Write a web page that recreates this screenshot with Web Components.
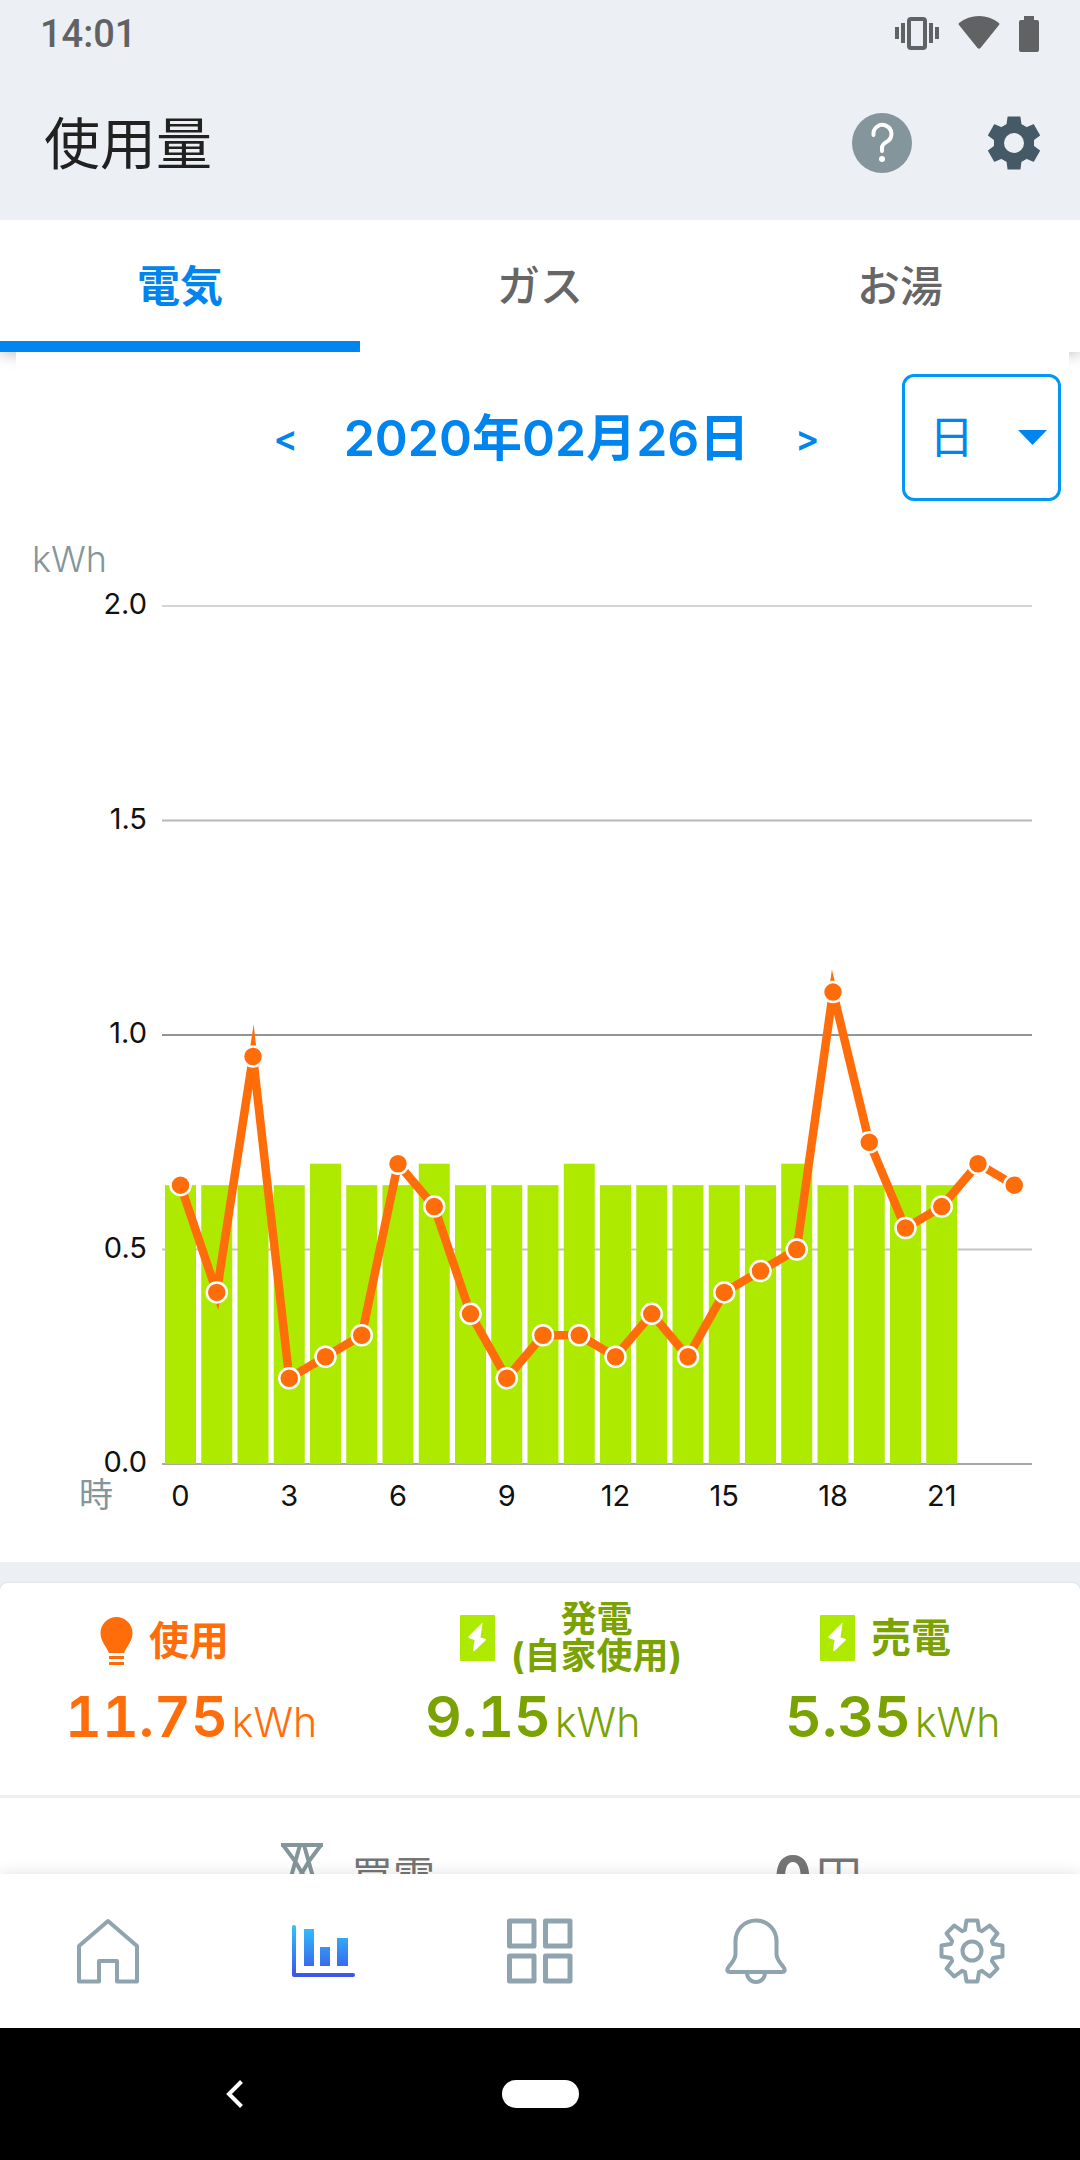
<!DOCTYPE html>
<html lang="ja">
<head>
<meta charset="UTF-8">
<meta name="viewport" content="width=device-width, initial-scale=1">
<title>使用量</title>
<style>
    body {
        margin: 0;
        background: #fff;
        font-family: Inter, "Noto Sans CJK JP", sans-serif;
    }
</style>
</head>
<body>
<energy-app>
    <status-bar slot="top">14:01</status-bar>
    <page-header slot="top">使用量</page-header>
    <tab-bar slot="top">
        <tab-item active>電気</tab-item>
        <tab-item>ガス</tab-item>
        <tab-item>お湯</tab-item>
    </tab-bar>
    <date-picker>2020年02月26日</date-picker>
    <usage-chart></usage-chart>
    <summary-card>
        <summary-item icon="bulb" value="11.75">使用</summary-item>
        <summary-item icon="bolt" value="9.15" small>発電<br>(自家使用)</summary-item>
        <summary-item icon="bolt" value="5.35">売電</summary-item>
        <cost-row slot="cost" value="0">買電</cost-row>
    </summary-card>
    <bottom-nav slot="bottom"></bottom-nav>
    <system-nav slot="bottom"></system-nav>
</energy-app>

<script>
class EnergyApp extends HTMLElement {
    constructor() {
        super();
        this.attachShadow({ mode: 'open' });
        this.shadowRoot.innerHTML = `
            <style>
                :host {
                    display: flex;
                    flex-direction: column;
                    height: 100vh;
                    overflow: hidden;
                }
                header, footer {
                    flex: none;
                    position: relative;
                }
                header {
                    box-shadow: 0 2px 14px rgba(0, 0, 0, 0.25);
                }
                main {
                    flex: 1;
                    min-height: 0;
                    overflow: hidden;
                    position: relative;
                }
                footer {
                    box-shadow: 0 0 16px rgba(0, 0, 0, 0.12);
                }
            </style>
            <header><slot name="top"></slot></header>
            <main><slot></slot></main>
            <footer><slot name="bottom"></slot></footer>
        `;
    }
}

class StatusBar extends HTMLElement {
    constructor() {
        super();
        this.attachShadow({ mode: 'open' });
        this.shadowRoot.innerHTML = `
            <style>
                :host {
                    display: flex;
                    align-items: center;
                    gap: 19px;
                    height: 68px;
                    padding: 0 41px 0 40px;
                    background: #ecf0f5;
                    color: #616264;
                    font: 500 38px/70px Roboto, sans-serif;
                }
                span { flex: 1; }
                svg { fill: currentColor; }
            </style>
            <span><slot></slot></span>
            <svg width="44" height="36" viewBox="-22 -17 44 36">
                <rect x="-8" y="-14" width="16" height="29" rx="2" fill="none" stroke="currentColor" stroke-width="4"/>
                <path d="M-16-10h4v20h-4zM12-10h4v20h-4zM-22-6h4v12h-4zM18-6h4v12h-4z"/>
            </svg>
            <svg width="42" height="36" viewBox="0 1 42 36">
                <path d="M1 10Q0 9 1 8Q10 1 21 1T41 8Q42 9 41 10L22.500 33Q21 34.500 19.500 33Z"/>
            </svg>
            <svg width="20" height="36" viewBox="0 0 20 36">
                <path d="M5 0h10v4h3q2 0 2 2v28q0 2-2 2H2q-2 0-2-2V6q0-2 2-2h3z"/>
            </svg>
        `;
    }
}

class PageHeader extends HTMLElement {
    constructor() {
        super();
        this.attachShadow({ mode: 'open' });
        this.shadowRoot.innerHTML = `
            <style>
                :host {
                    display: flex;
                    align-items: center;
                    gap: 72px;
                    height: 150px;
                    padding: 0 36px 2px 44px;
                    background: #ecf0f5;
                }
                h1 {
                    flex: 1;
                    margin: 0;
                    padding-top: 2px;
                    color: #212121;
                    font-size: 56px;
                    line-height: 68px;
                    font-weight: 400;
                }
                button {
                    display: flex;
                    padding: 0;
                    border: 0;
                    background: none;
                }
            </style>
            <h1><slot></slot></h1>
            <button aria-label="ヘルプ">
                <svg width="60" height="60" viewBox="-30 -30 60 60">
                    <circle r="30" fill="#84959b"/>
                    <path d="M-8.500-8A9 9 0 1 1 6-2Q0 1 0 5V8" fill="none" stroke="#fff" stroke-width="4" stroke-linecap="round"/>
                    <circle cy="16" r="3" fill="#fff"/>
                </svg>
            </button>
            <button aria-label="設定">
                <svg width="60" height="60" viewBox="-30 -30 60 60">
                    <g id="gear" fill="#455a66"></g>
                    <circle r="10" fill="#ecf0f5"/>
                </svg>
            </button>
        `;
        const teeth = [0, 60, 120, 180, 240, 300].map(a =>
            `<path transform="rotate(${a})" d="M-12 0L-12.500-16L-7.500-18.500L-6.500-26Q-6.500-26.500-6-26.500H6Q6.500-26.500 6.500-26L7.500-18.500L12.500-16L12 0Z"/>`);
        this.shadowRoot.getElementById('gear').innerHTML = teeth.join('');
    }
}

class TabBar extends HTMLElement {
    constructor() {
        super();
        this.attachShadow({ mode: 'open' });
        this.shadowRoot.innerHTML = `
            <style>
                :host {
                    display: grid;
                    grid-template-columns: repeat(3, 1fr);
                    background: #fff;
                }
            </style>
            <slot></slot>
        `;
    }
}

class TabItem extends HTMLElement {
    constructor() {
        super();
        this.attachShadow({ mode: 'open' });
        this.shadowRoot.innerHTML = `
            <style>
                :host {
                    display: block;
                }
                button {
                    width: 100%;
                    height: 132px;
                    padding: 0 0 6px;
                    border: 0;
                    background: none;
                    color: #666;
                    font: inherit;
                    font-size: 43px;
                    font-weight: 500;
                }
                :host([active]) button {
                    color: #0085ee;
                    font-weight: 700;
                    box-shadow: inset 0 -11px #0085ee;
                }
            </style>
            <button><slot></slot></button>
        `;
    }
}

class DatePicker extends HTMLElement {
    constructor() {
        super();
        this.attachShadow({ mode: 'open' });
        this.shadowRoot.innerHTML = `
            <style>
                :host {
                    display: grid;
                    grid-template-columns: 1fr auto 1fr;
                    align-items: center;
                    margin: 0 11px 0 16px;
                    padding: 22px 8px 0 16px;
                    background: #fff;
                    color: #0085ee;
                }
                .date {
                    grid-column: 2;
                    display: flex;
                    align-items: center;
                    gap: 46px;
                    font-size: 50px;
                    font-weight: 600;
                    white-space: nowrap;
                }
                .date span {
                    padding-bottom: 8px;
                }
                button {
                    padding: 0;
                    border: 0;
                    background: none;
                    color: inherit;
                    font: inherit;
                    font-size: 36px;
                }
                .unit {
                    justify-self: end;
                    position: relative;
                }
                select {
                    display: block;
                    appearance: none;
                    box-sizing: border-box;
                    width: 159px;
                    height: 127px;
                    padding: 0 24px;
                    border: 3px solid #0097f5;
                    border-radius: 12px;
                    background: #fff;
                    color: inherit;
                    font: inherit;
                    font-size: 45px;
                }
                svg {
                    position: absolute;
                    right: 14px;
                    top: 56px;
                    pointer-events: none;
                }
            </style>
            <div class="date">
                <button aria-label="前の日">&lt;</button>
                <span><slot></slot></span>
                <button aria-label="次の日">&gt;</button>
            </div>
            <div class="unit">
                <select aria-label="期間">
                    <option>日</option>
                    <option>月</option>
                    <option>年</option>
                </select>
                <svg width="29" height="15" viewBox="0 0 29 15"><path d="M0 0h29L14.500 15z" fill="#0085ee"/></svg>
            </div>
        `;
    }
}

class UsageChart extends HTMLElement {
    constructor() {
        super();
        this.attachShadow({ mode: 'open' });

        const used = [0.65, 0.4, 0.95, 0.2, 0.25, 0.3, 0.7, 0.6, 0.35, 0.2, 0.3, 0.3,
            0.25, 0.35, 0.25, 0.4, 0.45, 0.5, 1.1, 0.75, 0.55, 0.6, 0.7, 0.65];
        const generated = [0.65, 0.65, 0.65, 0.65, 0.7, 0.65, 0.65, 0.7, 0.65, 0.65, 0.65,
            0.7, 0.65, 0.65, 0.65, 0.65, 0.65, 0.7, 0.65, 0.65, 0.65, 0.65];

        const left = 162;
        const right = 1032;
        const base = 963;
        const step = (right - left) / 24;
        const x = hour => left + 18.5 + hour * step;
        const y = kwh => base - kwh * 429;

        const lines = [[2, '#d4d4d4'], [1.5, '#b8b8b8'], [1, '#949494'], [0.5, '#c4c4c4'], [0, '#a8a8a8']];
        const grid = lines.map(([v, color]) => `
            <line x1="${left}" x2="${right}" y1="${y(v)}" y2="${y(v)}" stroke="${color}" stroke-width="2"/>
            <text x="147" y="${y(v) + 8}" text-anchor="end">${v.toFixed(1)}</text>`);
        const bars = generated.map((v, i) =>
            `<rect x="${x(i) - 15.5}" y="${y(v)}" width="31" height="${base - y(v)}"/>`);
        const hours = [0, 3, 6, 9, 12, 15, 18, 21].map(h =>
            `<text x="${x(h)}" y="${base + 42}" text-anchor="middle">${h}</text>`);
        const points = used.map((v, i) => `${x(i)},${y(v)}`);
        const dots = used.map((v, i) => `<circle cx="${x(i)}" cy="${y(v)}" r="10"/>`);

        this.shadowRoot.innerHTML = `
            <style>
                :host {
                    display: block;
                }
                svg {
                    display: block;
                    width: 100%;
                    height: auto;
                }
                text { font-size: 29px; fill: #111; }
                .unit { font-size: 36px; font-weight: 300; fill: #84959b; }
                .hour { font-size: 34px; font-weight: 400; }
                .bars { fill: #aeea00; }
                polyline {
                    fill: none;
                    stroke: #ff6d0b;
                    stroke-width: 8.5;
                    stroke-miterlimit: 10;
                }
                circle { fill: #ff6d0b; stroke: #fff; stroke-width: 2.5; }
            </style>
            <svg viewBox="0 0 1080 1061" role="img" aria-label="電気使用量グラフ">
                <text class="unit" x="32" y="71">kWh</text>
                ${grid.join('')}
                <g class="bars">${bars.join('')}</g>
                <polyline points="${points.join(' ')}"/>
                ${dots.join('')}
                ${hours.join('')}
                <text class="unit hour" x="79" y="1006">時</text>
            </svg>
        `;
    }
}

class SummaryCard extends HTMLElement {
    constructor() {
        super();
        this.attachShadow({ mode: 'open' });
        this.shadowRoot.innerHTML = `
            <style>
                :host {
                    display: block;
                    padding-top: 21px;
                    background: #ecf0f5;
                }
                .card {
                    border-radius: 8px 8px 0 0;
                    background: #fff;
                    box-shadow: 0 0 3px rgba(0, 0, 0, 0.1);
                }
                .items {
                    display: grid;
                    grid-template-columns: repeat(3, 1fr);
                    padding: 19px 0 46px;
                    border-bottom: 3px solid #ecf0f5;
                }
            </style>
            <div class="card">
                <div class="items"><slot></slot></div>
                <slot name="cost"></slot>
            </div>
        `;
    }
}

const ICONS = {
    bulb: `<svg width="33" height="48" viewBox="0 0 33 48" fill="currentColor">
        <path d="M16.500 0A16 16 0 0 1 32.500 16C32.500 24 27 29 24 36H9C6 29 .500 24 .500 16A16 16 0 0 1 16.500 0Z"/>
        <path d="M9 39h15v3H9zM9 45h15v3H9z"/>
    </svg>`,
    bolt: `<svg width="35" height="46" viewBox="0 0 35 46">
        <rect width="35" height="46" rx="1" fill="#aeea00"/>
        <path d="M22 8L8.500 21.500V23L14.500 25L13 36H14.500L26 25V24L20.500 22.500L22.500 8.500Z" fill="#fff"/>
    </svg>`
};

class SummaryItem extends HTMLElement {
    constructor() {
        super();
        this.attachShadow({ mode: 'open' });
    }

    connectedCallback() {
        const icon = this.getAttribute('icon');
        this.shadowRoot.innerHTML = `
            <style>
                :host {
                    display: block;
                    color: ${icon === 'bulb' ? '#ff6d0b' : '#7aa200'};
                }
                .label {
                    display: flex;
                    align-items: center;
                    gap: 16px;
                    box-sizing: border-box;
                    height: 72px;
                    padding-left: 100px;
                    font-size: 40px;
                    line-height: 40px;
                    font-weight: 700;
                    white-space: nowrap;
                }
                :host([icon="bulb"]) .label {
                    padding-top: 6px;
                }
                :host([small]) .label {
                    font-size: 36px;
                    line-height: 37px;
                    text-align: center;
                }
                .value {
                    height: 64px;
                    margin-top: 11px;
                    padding-left: 65px;
                    font-size: 57px;
                    line-height: 64px;
                    font-weight: 600;
                    font-variant-numeric: tabular-nums;
                    white-space: nowrap;
                }
                small {
                    margin-left: 4px;
                    font-size: 41px;
                    line-height: 40px;
                    font-weight: 300;
                }
            </style>
            <div class="label">${ICONS[icon]}<span><slot></slot></span></div>
            <div class="value">${this.getAttribute('value')}<small>kWh</small></div>
        `;
    }
}

class CostRow extends HTMLElement {
    constructor() {
        super();
        this.attachShadow({ mode: 'open' });
    }

    connectedCallback() {
        this.shadowRoot.innerHTML = `
            <style>
                :host {
                    display: grid;
                    grid-template-columns: 1fr 1fr;
                    padding: 45px 0;
                    color: #757575;
                    font-size: 42px;
                    line-height: 68px;
                }
                .name {
                    display: flex;
                    gap: 28px;
                    padding-left: 281px;
                }
                .price {
                    display: flex;
                    align-items: center;
                    gap: 4px;
                    height: 68px;
                    padding-left: 234px;
                }
                .price span { font-size: 46px; }
                b { font-size: 56px; font-weight: 700; }
            </style>
            <div class="name">
                <svg width="42" height="68" viewBox="0 0 42 68" fill="none" stroke="#84959b" stroke-width="4">
                    <path d="M0 2H42M2 2L14 18L34 52L6 66M40 2L28 18L8 52L36 66M19 2L10 34L4 68M23 2L32 34L38 68"/>
                </svg>
                <span><slot></slot></span>
            </div>
            <div class="price"><b>${this.getAttribute('value')}</b><span>円</span></div>
        `;
    }
}

class BottomNav extends HTMLElement {
    constructor() {
        super();
        this.attachShadow({ mode: 'open' });

        // one tooth of the gear outline, repeated every 45 degrees
        const tooth = [[-7, -21], [-5.5, -30.5], [5.5, -30.5], [7, -21]];
        const gear = [];
        for (let i = 0; i < 8; i++) {
            const a = i * Math.PI / 4;
            tooth.forEach(([px, py]) => {
                gear.push([px * Math.cos(a) - py * Math.sin(a), px * Math.sin(a) + py * Math.cos(a)]
                    .map(n => n.toFixed(1)).join(','));
            });
        }

        const items = [
            ['#', 'ホーム', '<path d="M0-30L29-5V30.500H9V10H-9V30.500H-29V-5Z"/>'],
            ['#', '使用量', `
                <linearGradient id="blue" gradientUnits="userSpaceOnUse" x1="0" x2="0" y1="-24" y2="24">
                    <stop offset="0" stop-color="#2fc0ff"/><stop offset="1" stop-color="#3d56e8"/>
                </linearGradient>
                <path d="M-30-24V24H29" stroke="url(#blue)" stroke-linecap="round"/>
                <path d="M-20-22h10v37h-10zM-4-4h10v19H-4zM13-13h11v28H13z" fill="url(#blue)" stroke="none"/>`],
            ['#', 'メニュー', '<path stroke-width="5" d="M-30.500-30h24.500v25h-24.500zM5.500-30h24.500v25h-24.500zM-30.500 5h24.500v25h-24.500zM5.500 5h24.500v25h-24.500z"/>'],
            ['#', 'お知らせ', '<path d="M0-30.500C12-30.500 20.500-21 20.500-10V3C20.500 9 25 12 28 17Q30 21 26 21H-26Q-30 21-28 17C-25 12-20.500 9-20.500 3V-10C-20.500-21-12-30.500 0-30.500ZM-9 22A9 9 0 0 0 9 22"/>'],
            ['#', '設定', `<polygon points="${gear.join(' ')}"/><circle r="9.500"/>`]
        ];
        this.shadowRoot.innerHTML = `
            <style>
                :host {
                    display: block;
                    background: #fff;
                }
                nav {
                    display: grid;
                    grid-template-columns: repeat(5, 1fr);
                    height: 154px;
                }
                a {
                    display: flex;
                    align-items: center;
                    justify-content: center;
                }
                svg {
                    fill: none;
                    stroke: #8fa4ae;
                    stroke-width: 4;
                    stroke-linejoin: round;
                }
            </style>
            <nav>${items.map(([href, label, shape]) =>
                `<a href="${href}" aria-label="${label}"><svg width="68" height="68" viewBox="-34 -34 68 68">${shape}</svg></a>`).join('')}
            </nav>
        `;
    }
}

class SystemNav extends HTMLElement {
    constructor() {
        super();
        this.attachShadow({ mode: 'open' });
        this.shadowRoot.innerHTML = `
            <style>
                :host {
                    display: grid;
                    grid-template-columns: 1fr 140px 1fr;
                    align-items: center;
                    justify-items: center;
                    height: 132px;
                    background: #000;
                }
                button {
                    display: flex;
                    padding: 0;
                    border: 0;
                    background: none;
                }
                .home {
                    width: 77px;
                    height: 28px;
                    border-radius: 14px;
                    background: #fff;
                }
            </style>
            <button aria-label="戻る">
                <svg width="18" height="28" viewBox="0 0 18 28">
                    <path d="M15.500 1.500L3 14L15.500 26.500" fill="none" stroke="#fff" stroke-width="4"/>
                </svg>
            </button>
            <button class="home" aria-label="ホーム画面"></button>
        `;
    }
}

customElements.define('energy-app', EnergyApp);
customElements.define('status-bar', StatusBar);
customElements.define('page-header', PageHeader);
customElements.define('tab-bar', TabBar);
customElements.define('tab-item', TabItem);
customElements.define('date-picker', DatePicker);
customElements.define('usage-chart', UsageChart);
customElements.define('summary-card', SummaryCard);
customElements.define('summary-item', SummaryItem);
customElements.define('cost-row', CostRow);
customElements.define('bottom-nav', BottomNav);
customElements.define('system-nav', SystemNav);
</script>
</body>
</html>
